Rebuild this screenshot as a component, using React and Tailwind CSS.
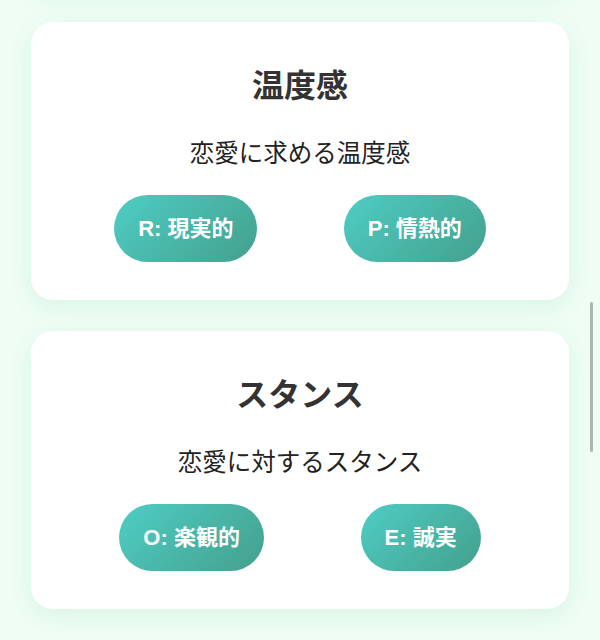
const sections = [
  {
    title: '温度感',
    desc: '恋愛に求める温度感',
    options: ['R: 現実的', 'P: 情熱的'],
  },
  {
    title: 'スタンス',
    desc: '恋愛に対するスタンス',
    options: ['O: 楽観的', 'E: 誠実'],
  },
];

function AxisCard({ title, desc, options }) {
  return (
    <section className="rounded-[22px] bg-white px-10 pt-10 pb-[38px] text-center shadow-[0_6px_22px_rgba(80,190,140,0.14)]">
      <h2 className="mb-[26px] text-[32px] font-bold leading-[48px] text-[#333]">{title}</h2>
      <p className="mb-[23px] text-[24.5px] leading-9 text-[#222]">{desc}</p>
      <div className="flex justify-around">
        {options.map((opt) => (
          <button
            key={opt}
            className="rounded-full bg-linear-135 from-[#4ecdc4] to-[#44a08d] px-6 py-[17px] text-[22px] font-bold leading-[33px] text-white"
          >
            {opt}
          </button>
        ))}
      </div>
    </section>
  );
}

export default function App() {
  return (
    <div
      className="relative h-[640px] overflow-hidden bg-[#effdf4] px-[31px] pt-[22px]"
      style={{ fontFamily: '"Liberation Sans", "Noto Sans CJK JP", sans-serif' }}
    >
      {/* previous card, scrolled out of view */}
      <div className="-mt-[231px] mb-[31px] h-[200px] rounded-[22px] bg-white shadow-[0_6px_22px_rgba(80,190,140,0.14)]" />
      <div className="flex flex-col gap-[31px]">
        {sections.map((s) => (
          <AxisCard key={s.title} {...s} />
        ))}
      </div>
      <div className="absolute right-[7px] top-[302px] h-[150px] w-[3px] rounded-full bg-[#adb7b1]" />
    </div>
  );
}
